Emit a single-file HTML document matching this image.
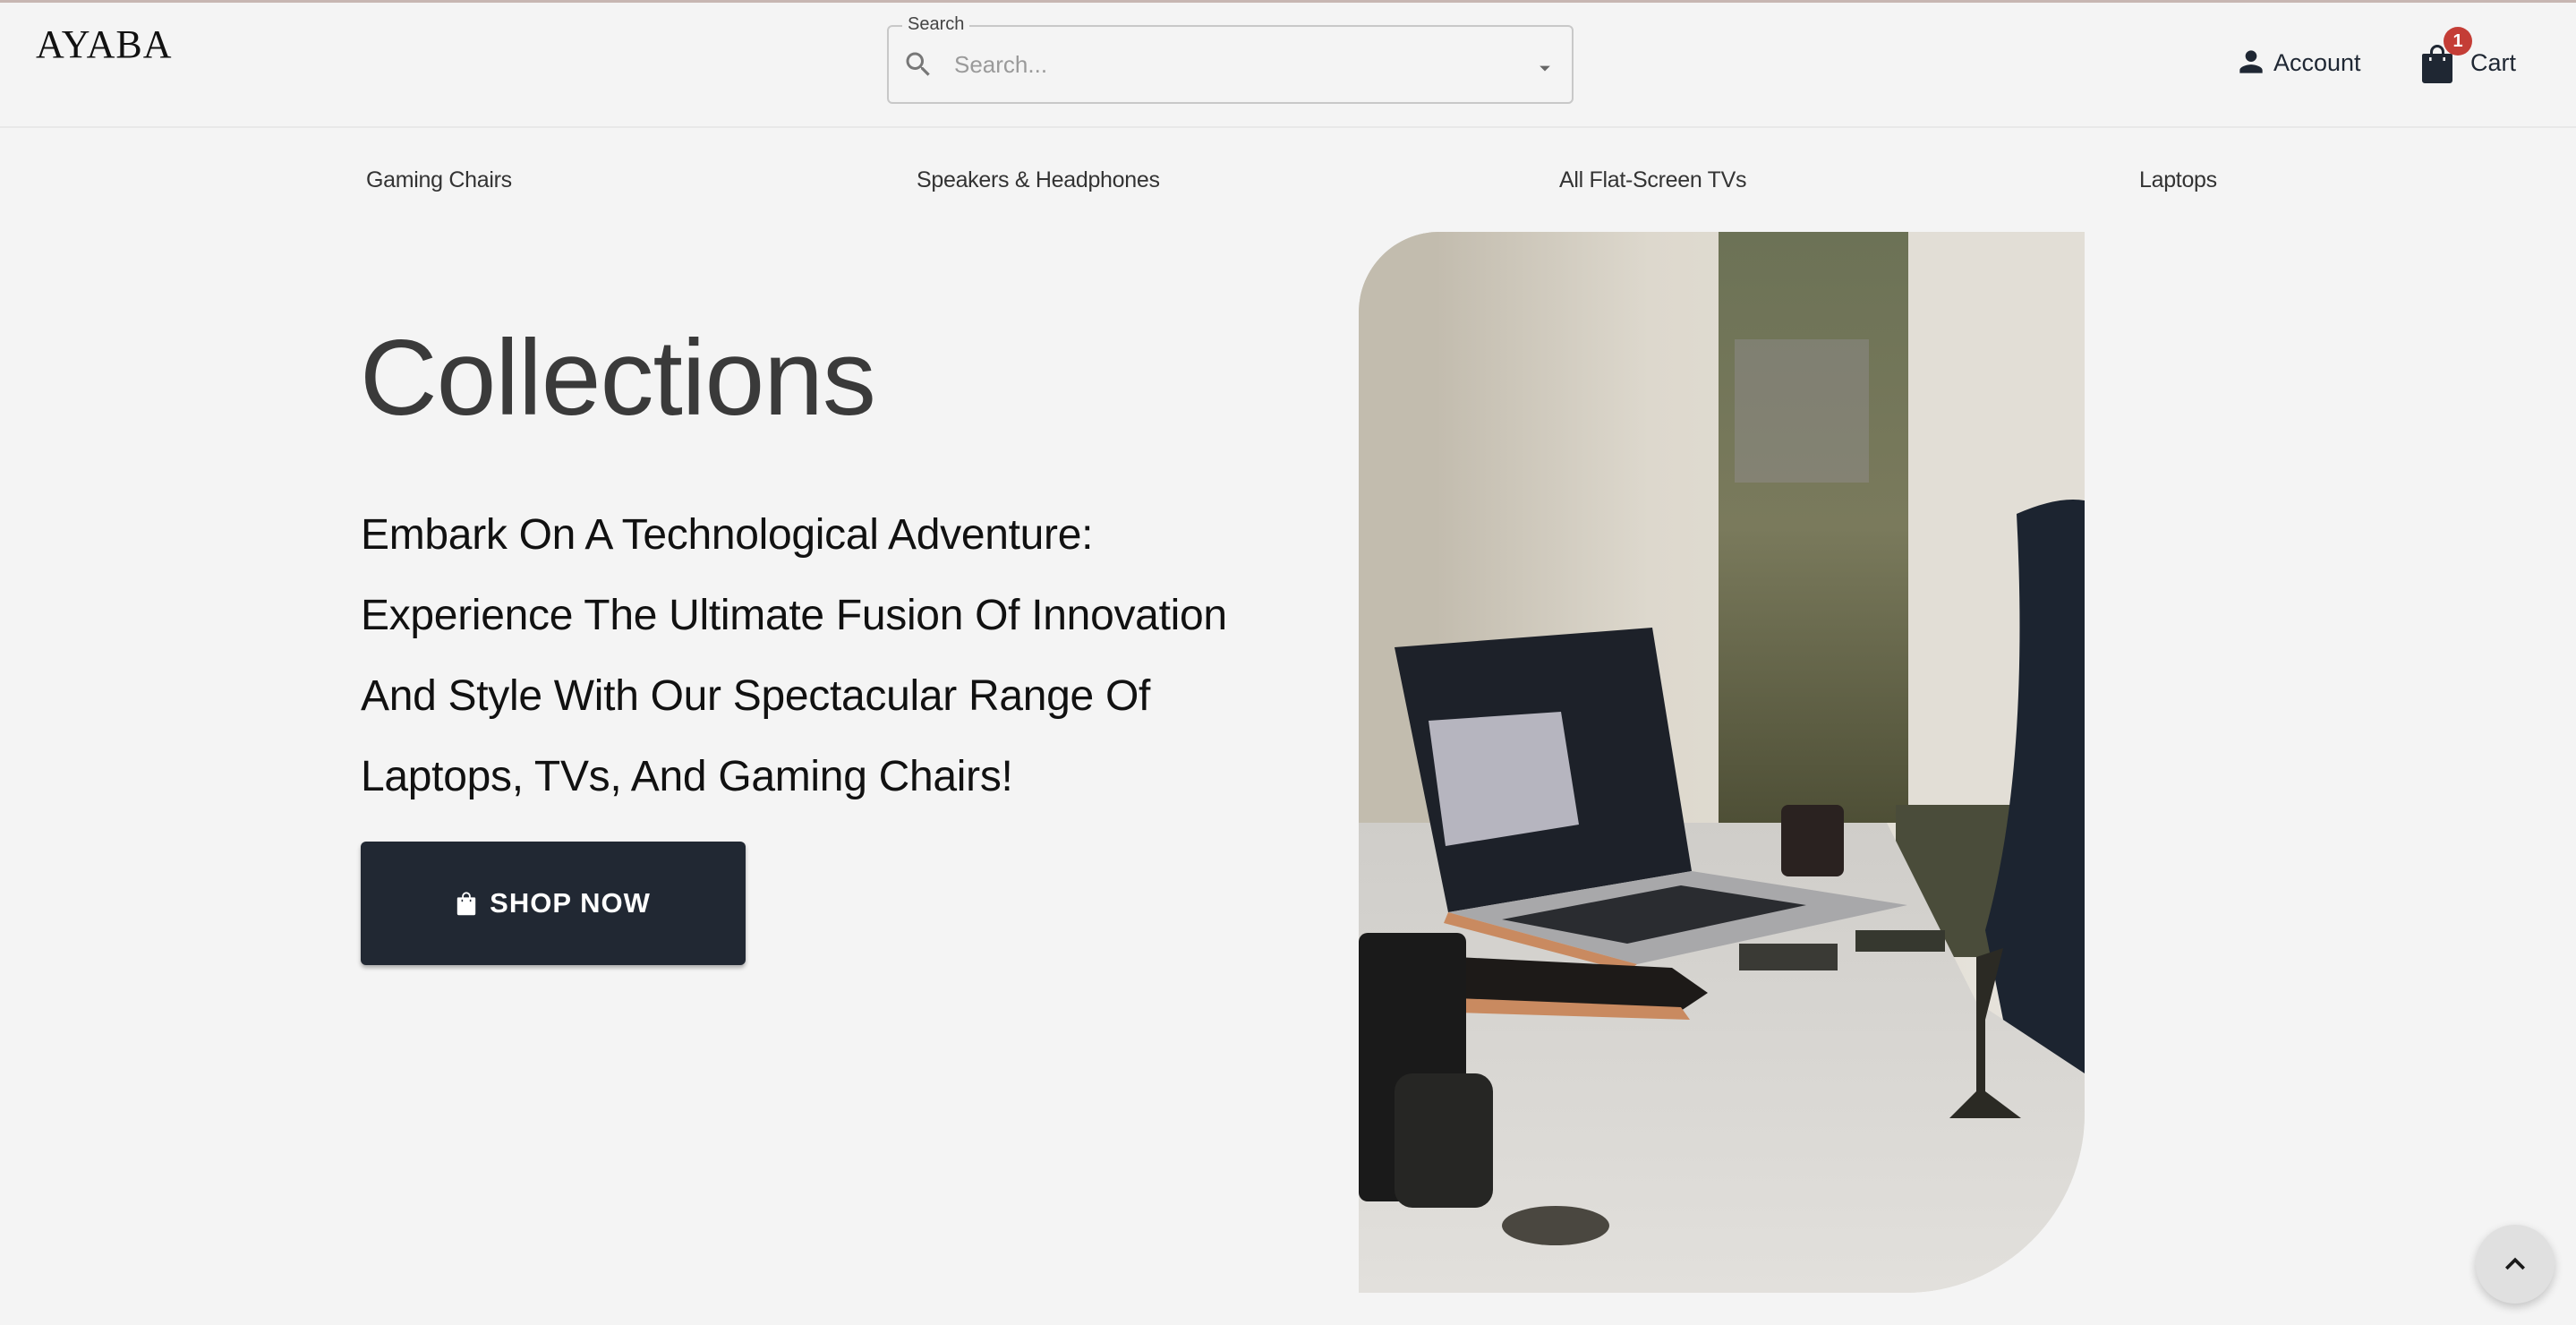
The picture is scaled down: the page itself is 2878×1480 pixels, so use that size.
<!DOCTYPE html>
<html><head><meta charset="utf-8"><style>
*{margin:0;padding:0;box-sizing:border-box}
html,body{width:2878px;height:1480px;overflow:hidden;background:#f4f4f4;font-family:"Liberation Sans",sans-serif;color:#1f2733}
.abs{position:absolute}
.topline{left:0;top:0;width:2878px;height:3px;background:#c7b6b2}
.logo{left:40px;top:22px;font-family:"Liberation Serif",serif;font-size:44px;line-height:56px;color:#111;letter-spacing:1px}
.search{left:991px;top:28px;width:767px;height:88px;border:2px solid #c8c8c8;border-radius:6px}
.slabel{left:1008px;top:14px;font-size:20px;line-height:26px;padding:0 6px;background:#f4f4f4;color:#444}
.ph{left:1066px;top:56px;font-size:26px;line-height:32px;color:#9a9a9a}
.hline{left:0;top:141px;width:2878px;height:2px;background:#e8e8e8}
.nav{top:185px;font-size:25px;line-height:32px;color:#333;letter-spacing:-0.3px}
.hdr{top:53px;font-size:27px;line-height:34px;color:#1f2733}
.badge{left:2730px;top:30px;width:32px;height:32px;border-radius:50%;background:#c43d36;color:#fff;font-size:20px;font-weight:bold;text-align:center;line-height:32px}
.title{left:402px;top:362px;font-size:120px;line-height:120px;color:#3a3a3a;font-weight:300;letter-spacing:-1px}
.para{left:403px;top:553px;font-size:48px;line-height:90px;color:#111;letter-spacing:-0.3px;white-space:nowrap}
.btn{left:403px;top:940px;width:430px;height:138px;background:#212833;border-radius:6px;box-shadow:0 3px 5px rgba(0,0,0,.3);color:#fff;font-size:31px;font-weight:bold;letter-spacing:1px;display:flex;align-items:center;justify-content:center;gap:14px}
.img{left:1518px;top:259px;width:811px;height:1185px;border-radius:90px 0 200px 0;overflow:hidden}
.up{left:2766px;top:1368px;width:88px;height:88px;border-radius:50%;background:#e0e0e0;box-shadow:0 4px 10px rgba(0,0,0,.2)}
</style></head><body>
<div class="abs topline"></div>
<div class="abs logo">AYABA</div>
<div class="abs search"></div>
<div class="abs slabel">Search</div>
<svg class="abs" style="left:1008px;top:54px" width="36" height="36" viewBox="0 0 24 24"><path fill="#777" d="M15.5 14h-.79l-.28-.27A6.470 6.47 0 0 0 16 9.5 6.5 6.5 0 1 0 9.5 16c1.61 0 3.09-.59 4.23-1.57l.27.28v.79l5 4.99L20.49 19l-4.990-5zm-6 0C7.01 14 5 11.99 5 9.5S7.01 5 9.5 5 14 7.01 14 9.5 11.99 14 9.5 14z"/></svg>
<div class="abs ph">Search...</div>
<svg class="abs" style="left:1712px;top:62px" width="28" height="28" viewBox="0 0 24 24"><path fill="#666" d="M7 10l5 5 5-5z"/></svg>
<svg class="abs" style="left:2496px;top:50px" width="38" height="38" viewBox="0 0 24 24"><path fill="#1f2733" d="M12 12c2.21 0 4-1.79 4-4s-1.79-4-4-4-4 1.79-4 4 1.79 4 4 4zm0 2c-2.67 0-8 1.34-8 4v2h16v-2c0-2.66-5.33-4-8-4z"/></svg>
<div class="abs hdr" style="left:2540px">Account</div>
<svg class="abs" style="left:2703px;top:48px" width="40" height="46" viewBox="0 0 20 23"><path fill="#1f2733" d="M6 6V5a4 4 0 0 1 8 0v1h3.5a1 1 0 0 1 1 1v14a1.5 1.5 0 0 1-1.5 1.5H3A1.5 1.5 0 0 1 1.5 21V7a1 1 0 0 1 1-1zm1.5 0h5V5a2.5 2.5 0 0 0-5 0z"/><rect x="5.5" y="8" width="1.3" height="2" fill="#f4f4f4"/><rect x="13.2" y="8" width="1.3" height="2" fill="#f4f4f4"/></svg>
<div class="abs badge">1</div>
<div class="abs hdr" style="left:2760px">Cart</div>
<div class="abs hline"></div>
<div class="abs nav" style="left:409px">Gaming Chairs</div>
<div class="abs nav" style="left:1024px">Speakers &amp; Headphones</div>
<div class="abs nav" style="left:1742px">All Flat-Screen TVs</div>
<div class="abs nav" style="left:2390px">Laptops</div>
<div class="abs title">Collections</div>
<div class="abs para">Embark On A Technological Adventure:<br>Experience The Ultimate Fusion Of Innovation<br>And Style With Our Spectacular Range Of<br>Laptops, TVs, And Gaming Chairs!</div>
<div class="abs btn"><svg width="24" height="28" viewBox="0 0 20 23"><path fill="#fff" d="M6 6V5a4 4 0 0 1 8 0v1h3.5a1 1 0 0 1 1 1v14a1.5 1.5 0 0 1-1.5 1.5H3A1.5 1.5 0 0 1 1.5 21V7a1 1 0 0 1 1-1zm1.5 0h5V5a2.5 2.5 0 0 0-5 0z"/><rect x="5.5" y="8" width="1.3" height="2" fill="#212833"/><rect x="13.2" y="8" width="1.3" height="2" fill="#212833"/></svg><span>SHOP NOW</span></div>
<div class="abs img"><svg width="811" height="1185" viewBox="0 0 811 1185">
<defs>
<linearGradient id="w" x1="0" y1="0" x2="0" y2="1"><stop offset="0" stop-color="#6c7256"/><stop offset=".5" stop-color="#7a7a5c"/><stop offset="1" stop-color="#4e4f36"/></linearGradient>
<linearGradient id="c" x1="0" y1="0" x2="1" y2="0"><stop offset="0" stop-color="#b9b2a3"/><stop offset=".4" stop-color="#ddd8cd"/><stop offset="1" stop-color="#e8e5de"/></linearGradient>
<linearGradient id="d" x1="0" y1="0" x2="0" y2="1"><stop offset="0" stop-color="#cfcdc9"/><stop offset="1" stop-color="#e2e0dc"/></linearGradient>
</defs>
<rect width="811" height="1185" fill="url(#c)"/>
<rect x="0" y="0" width="90" height="660" fill="#c2bcae"/>
<rect x="402" y="0" width="212" height="660" fill="url(#w)"/>
<rect x="420" y="120" width="150" height="160" fill="#9a95a0" opacity=".35"/>
<rect x="614" y="0" width="197" height="660" fill="#e2ded6"/>
<rect x="600" y="640" width="211" height="170" fill="#4a4c3a"/>
<path d="M0 660 L590 660 L690 860 L811 940 L811 1185 L0 1185Z" fill="url(#d)"/>
<path d="M735 315 Q780 295 811 300 L811 940 L720 880 L700 780 Q750 600 735 315Z" fill="#1c2430"/>
<path d="M40 464 L328 442 L372 714 L100 760Z" fill="#1d2129"/>
<path d="M78 546 L226 536 L246 662 L97 686Z" fill="#b6b5bf"/>
<path d="M100 760 L372 714 L613 752 L311 818Z" fill="#a8a8aa"/>
<path d="M160 768 L360 730 L500 752 L300 795Z" fill="#2a2c30"/>
<path d="M100 760 L311 818 L300 826 L95 772Z" fill="#c98a60"/>
<rect x="472" y="640" width="70" height="80" rx="8" fill="#2a2220"/>
<path d="M110 810 L350 822 L390 850 L360 870 L110 860Z" fill="#1d1a18"/>
<path d="M110 856 L360 866 L370 880 L110 872Z" fill="#c98a60"/>
<rect x="425" y="795" width="110" height="30" fill="#3a3a35"/>
<rect x="555" y="780" width="100" height="24" fill="#36382f"/>
<rect x="0" y="783" width="120" height="300" rx="10" fill="#1a1a1a"/>
<rect x="40" y="940" width="110" height="150" rx="20" fill="#262624"/>
<ellipse cx="220" cy="1110" rx="60" ry="22" fill="#4a4740"/>
<path d="M690 810 L720 800 L700 880 L700 960 L740 990 L660 990 L690 960 L690 880Z" fill="#2b2a24"/>
</svg></div>
<div class="abs up"><svg style="position:absolute;left:22px;top:22px" width="44" height="44" viewBox="0 0 24 24"><path fill="#1a1a1a" d="M7.41 15.41L12 10.83l4.59 4.58L18 14l-6-6-6 6z"/></svg></div>
</body></html>
